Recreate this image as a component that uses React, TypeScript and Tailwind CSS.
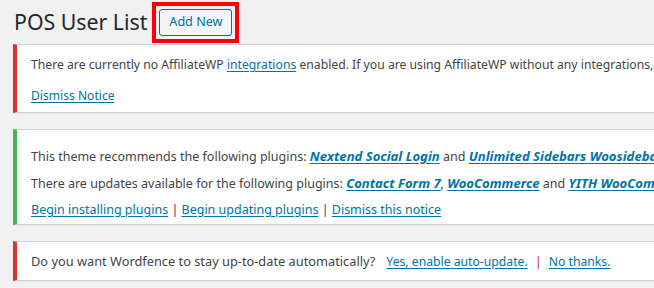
import React from "react";

const font = { fontFamily: '"Noto Sans", "Open Sans", sans-serif' };

function Notice({ color, className, children }: { color: string; className?: string; children: React.ReactNode }) {
  return (
    <div
      className={`bg-white border border-[#ccd0d4] border-l-4 shadow-[0_1px_1px_rgba(0,0,0,0.04)] pl-[14px] ${className ?? ""}`}
      style={{ borderLeftColor: color }}
    >
      {children}
    </div>
  );
}

const link = "text-[#0073aa] underline underline-offset-2";
const strong = "text-[#0073aa] underline underline-offset-2 font-bold italic text-[13.1px]";

export default function App() {
  return (
    <div className="w-[654px] h-[288px] overflow-hidden bg-[#f1f1f1] text-[#444] text-[12.5px]" style={font}>
      <div className="w-[900px] pl-[13px]">
        <div className="flex items-center h-[44px]">
          <h1 className="text-[21.3px] font-normal text-[#23282d] leading-none pl-[1px]">POS User List</h1>
          <div className="ml-[5px] border-4 border-[#ff0000] p-[3px] mt-[1px]">
            <button className="h-[27px] w-[73px] rounded-[3px] border border-[#0071a1] bg-[#f3f5f6] text-[#0071a1] text-[12.6px] leading-none">
              Add New
            </button>
          </div>
        </div>

        <Notice color="#dc3232" className="h-[69px] pt-[10px] flex flex-col gap-[11px]">
          <p className="leading-[20px] whitespace-nowrap text-[12.2px]">
            There are currently no AffiliateWP <span className={link}>integrations</span> enabled. If you are using
            AffiliateWP without any integrations, you may need to
          </p>
          <p className="leading-[20px] text-[12.1px]">
            <span className={link}>Dismiss Notice</span>
          </p>
        </Notice>

        <Notice color="#46b450" className="mt-[16px] h-[96px] pt-[16px] flex flex-col gap-[6px]">
          <p className="leading-[20px] whitespace-nowrap">
            This theme recommends the following plugins: <span className={strong}>Nextend Social Login</span> and{" "}
            <span className={strong}>Unlimited Sidebars Woosidebars</span>.
          </p>
          <p className="leading-[20px] whitespace-nowrap">
            There are updates available for the following plugins: <span className={strong}>Contact Form 7</span>,{" "}
            <span className={strong}>WooCommerce</span> and <span className={strong}>YITH WooCommerce Wishlist</span>.
          </p>
          <p className="leading-[20px] whitespace-nowrap">
            <span className={link}>Begin installing plugins</span> | <span className={link}>Begin updating plugins</span> |{" "}
            <span className={link}>Dismiss this notice</span>
          </p>
        </Notice>

        <Notice color="#dc3232" className="mt-[16px] h-[40px] flex items-center">
          <p className="leading-[20px] whitespace-nowrap text-[12.8px]">
            Do you want Wordfence to stay up-to-date automatically?
            <span className={`${link} ml-[11px] text-[12.2px]`}>Yes, enable auto-update.</span>
            <span className="text-[#dc3232] mx-[7px]">|</span>
            <span className={`${link} text-[12.2px]`}>No thanks.</span>
          </p>
        </Notice>
      </div>
    </div>
  );
}
